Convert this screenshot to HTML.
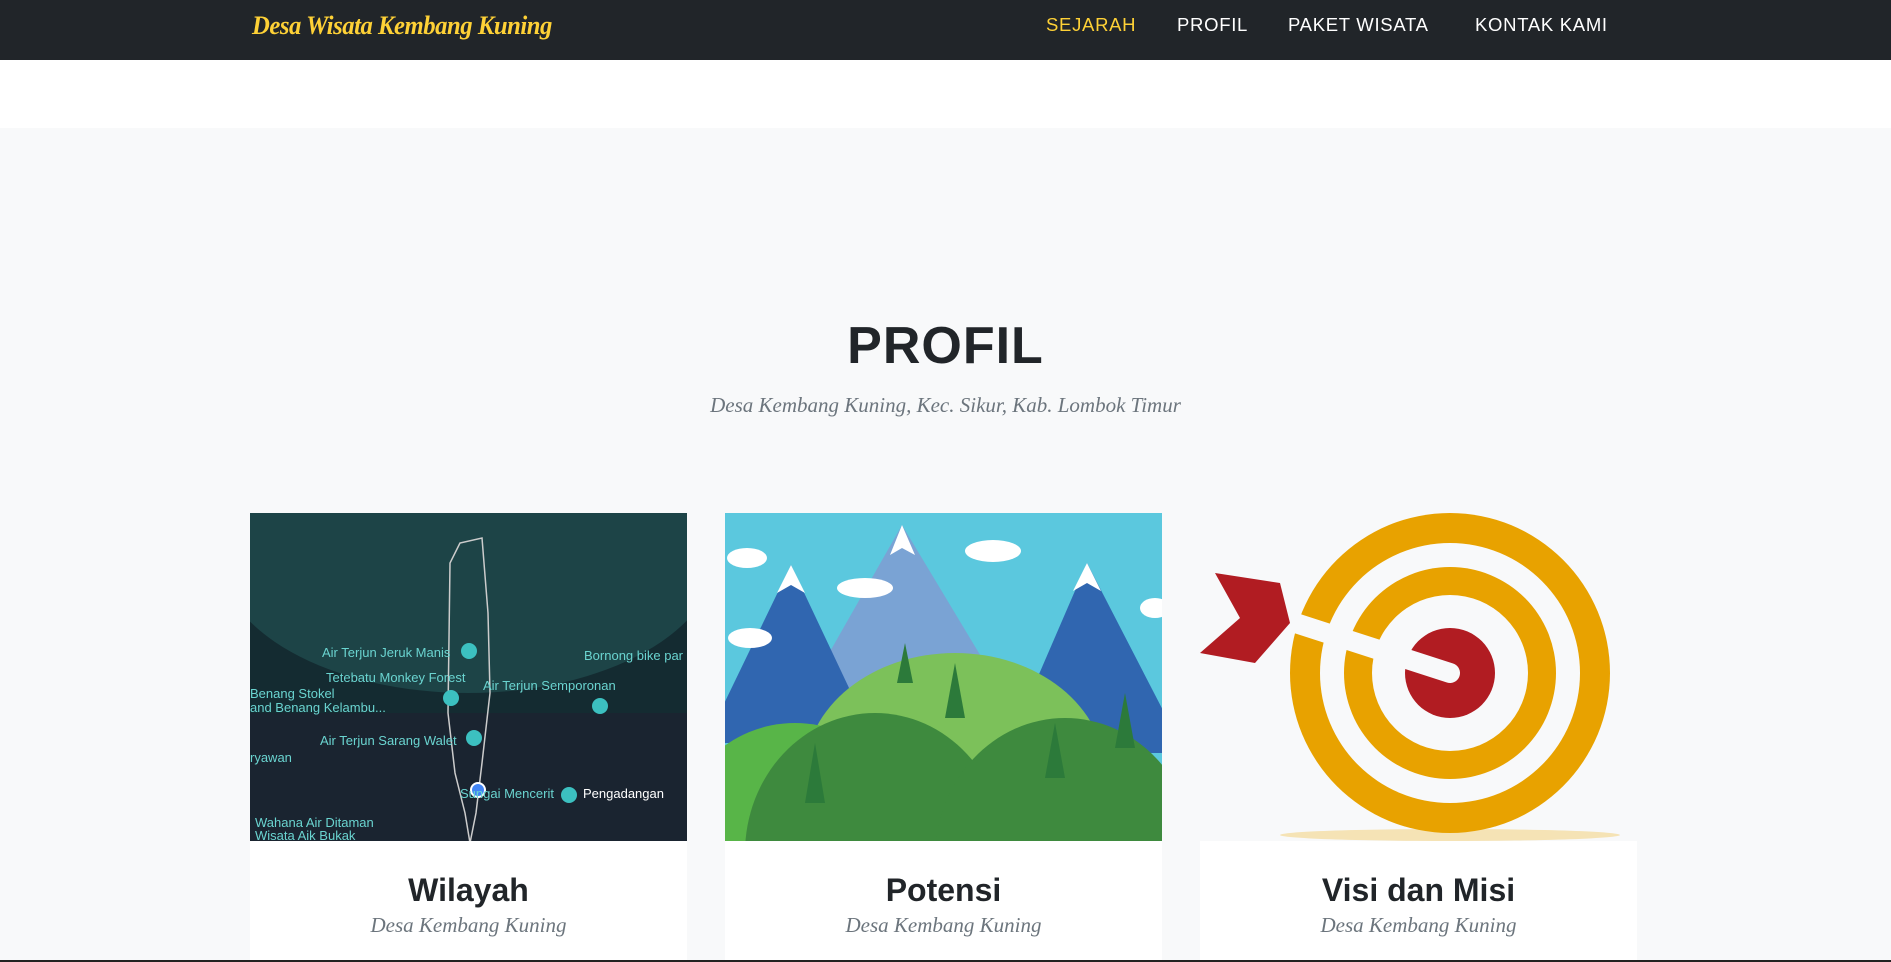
<!DOCTYPE html>
<html><head><meta charset="utf-8"><style>
*{margin:0;padding:0;box-sizing:border-box}
html,body{width:1891px;height:962px;overflow:hidden}
body{background:#f8f9fa;font-family:"Liberation Sans",sans-serif;position:relative}
.nav{position:absolute;left:0;top:0;width:1891px;height:60px;background:#212529}
.logo{position:absolute;left:252px;top:11px;color:#fed136;font:italic bold 26px "Liberation Serif",serif;letter-spacing:-0.5px;transform:scaleX(0.95);transform-origin:left}
.nav a{position:absolute;top:14px;color:#fff;font-size:18.5px;letter-spacing:0.7px;text-decoration:none}
.white{position:absolute;top:60px;left:0;width:1891px;height:68px;background:#fff}
h2{position:absolute;top:316px;width:1891px;text-align:center;font:bold 52px "Liberation Sans",sans-serif;color:#212529;letter-spacing:1px}
.sub{position:absolute;top:393px;width:1891px;text-align:center;font:italic 21px "Liberation Serif",serif;color:#6c757d}
.card{position:absolute;top:513px;width:437px;height:449px;background:#fff}
.card svg{position:absolute;left:0;top:0}
.t{position:absolute;top:359px;width:437px;text-align:center;font:bold 32px "Liberation Sans",sans-serif;color:#212529}
.s{position:absolute;top:400px;width:437px;text-align:center;font:italic 21px "Liberation Serif",serif;color:#6c757d}
.bl{position:absolute;top:960px;left:0;width:1891px;height:2px;background:#222}
</style></head><body>
<div class="nav">
<div class="logo">Desa Wisata Kembang Kuning</div>
<a style="left:1046px;color:#fed136">SEJARAH</a>
<a style="left:1177px">PROFIL</a>
<a style="left:1288px">PAKET WISATA</a>
<a style="left:1475px">KONTAK KAMI</a>
</div>
<div class="white"></div>
<h2>PROFIL</h2>
<div class="sub">Desa Kembang Kuning, Kec. Sikur, Kab. Lombok Timur</div>

<div class="card" style="left:250px">
<svg width="437" height="328"><rect width="437" height="328" fill="#142b31"/>
<ellipse cx="218" cy="40" rx="250" ry="140" fill="#1d4447"/>
<rect y="200" width="437" height="128" fill="#1a2430"/>
<path d="M210 30 L200 50 L198 200 L205 260 L215 300 L220 330 L226 300 L232 250 L240 180 L238 100 L232 25 Z" fill="none" stroke="#ccc" stroke-width="1.5"/>
<circle cx="228" cy="277" r="7" fill="#4285f4" stroke="#fff" stroke-width="2"/>
<g fill="#6ad4d0" font-size="13" font-family="Liberation Sans"><text x="72" y="144">Air Terjun Jeruk Manis</text><text x="76" y="169">Tetebatu Monkey Forest</text><text x="0" y="185">Benang Stokel</text><text x="0" y="199">and Benang Kelambu...</text><text x="233" y="177">Air Terjun Semporonan</text><text x="334" y="147">Bornong bike par</text><text x="70" y="232">Air Terjun Sarang Walet</text><text x="0" y="249">ryawan</text><text x="210" y="285">Sungai Mencerit</text><text x="5" y="314">Wahana Air Ditaman</text><text x="5" y="327">Wisata Aik Bukak</text></g>
<text x="333" y="285" fill="#fff" font-size="13" font-family="Liberation Sans">Pengadangan</text>
<g fill="#3cc0c0"><circle cx="219" cy="138" r="8"/><circle cx="201" cy="185" r="8"/><circle cx="224" cy="225" r="8"/><circle cx="350" cy="193" r="8"/><circle cx="319" cy="282" r="8"/></g>
</svg>
<div class="t">Wilayah</div><div class="s">Desa Kembang Kuning</div></div>

<div class="card" style="left:725px">
<svg width="437" height="328"><rect width="437" height="328" fill="#5bc8de"/>
<polygon points="177,12 290,200 70,200" fill="#7aa3d4"/>
<polygon points="177,12 190,42 177,35 165,42" fill="#fff"/>
<polygon points="66,52 150,230 -20,230" fill="#3066b0"/>
<polygon points="66,52 80,80 66,72 52,80" fill="#fff"/>
<polygon points="362,50 460,240 280,240" fill="#3066b0"/>
<polygon points="362,50 376,78 362,70 348,78" fill="#fff"/>
<ellipse cx="230" cy="260" rx="150" ry="120" fill="#7cc15a"/>
<ellipse cx="70" cy="330" rx="120" ry="120" fill="#58b548"/>
<ellipse cx="150" cy="340" rx="130" ry="140" fill="#3e8a3e"/>
<ellipse cx="340" cy="345" rx="130" ry="140" fill="#3e8a3e"/>
<g fill="#2c7a3a"><polygon points="230,150 240,205 220,205"/><polygon points="90,230 100,290 80,290"/><polygon points="330,210 340,265 320,265"/><polygon points="400,180 410,235 390,235"/><polygon points="180,130 188,170 172,170"/></g>
<g fill="#fff"><ellipse cx="22" cy="45" rx="20" ry="10"/><ellipse cx="268" cy="38" rx="28" ry="11"/><ellipse cx="140" cy="75" rx="28" ry="10"/><ellipse cx="25" cy="125" rx="22" ry="10"/><ellipse cx="430" cy="95" rx="15" ry="10"/></g>
</svg>
<div class="t">Potensi</div><div class="s">Desa Kembang Kuning</div></div>

<div class="card" style="left:1200px;background:#fff">
<svg width="437" height="328"><rect width="437" height="328" fill="#f8f9fa"/>
<ellipse cx="250" cy="322" rx="170" ry="6" fill="#f5e3b5"/>
<circle cx="250" cy="160" r="160" fill="#e8a200"/>
<circle cx="250" cy="160" r="130" fill="#f8f9fa"/>
<circle cx="250" cy="160" r="106" fill="#e8a200"/>
<circle cx="250" cy="160" r="78" fill="#f8f9fa"/>
<circle cx="250" cy="160" r="45" fill="#b11c22"/>
<line x1="80" y1="105" x2="250" y2="160" stroke="#f8f9fa" stroke-width="20" stroke-linecap="round"/>
<polygon points="15,60 80,70 90,110 55,150 0,140 40,105" fill="#b11c22"/>
</svg>
<div class="t">Visi dan Misi</div><div class="s">Desa Kembang Kuning</div></div>
<div class="bl"></div>
</body></html>
